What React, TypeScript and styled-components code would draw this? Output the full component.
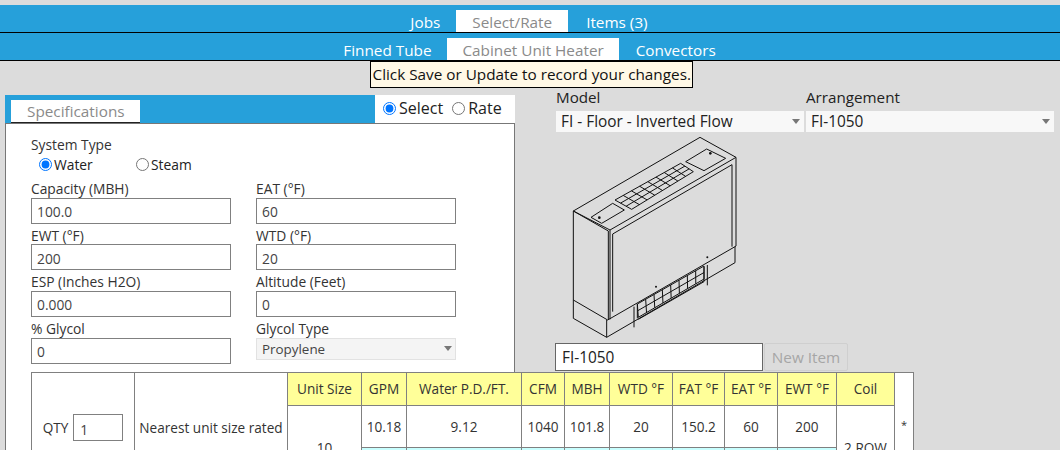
import React from 'react';
import styled, { createGlobalStyle } from 'styled-components';

const GlobalStyle = createGlobalStyle`
  html, body {
    margin: 0;
    height: 450px;
    overflow: hidden;
    background: #dcdcdc;
    font-family: "Open Sans", "Noto Sans", sans-serif;
    color: #222;
  }
`;

const TabBar = styled.div<{ $first?: boolean }>`
  display: flex;
  justify-content: center;
  box-sizing: border-box;
  height: 28px;
  padding-top: 5px;
  margin-top: ${(p) => (p.$first ? '5px' : '0')};
  background: #26a0da;
  border-bottom: 1px solid #000;
`;

const Tab = styled.div<{ $active?: boolean; $pad: number }>`
  padding: 0 ${(p) => p.$pad}px;
  height: 22px;
  line-height: 24px;
  font-size: 15.3px;
  background: ${(p) => (p.$active ? '#fff' : 'transparent')};
  color: ${(p) => (p.$active ? '#8a8a8a' : '#fff')};
`;

const NoticeRow = styled.div`
  display: flex;
  justify-content: center;
  padding-left: 2px;
`;

const Notice = styled.div`
  box-sizing: border-box;
  width: 323px;
  height: 27px;
  line-height: 25px;
  padding-left: 2px;
  font-size: 15.3px;
  white-space: nowrap;
  border: 1px solid #000;
  background: #fff8e6;
  color: #111;
`;

const Main = styled.div`
  display: flex;
  align-items: flex-start;
  padding-left: 5px;
`;

const Panel = styled.div`
  width: 510px;
  margin-top: 7px;
  flex: none;
`;

const PanelHead = styled.div`
  display: flex;
  justify-content: space-between;
  height: 28px;
  background: #26a0da;
`;

const PanelTab = styled.div`
  align-self: flex-end;
  margin-left: 6px;
  width: 129px;
  height: 23px;
  line-height: 22px;
  box-sizing: border-box;
  padding-left: 16px;
  background: #fff;
  color: #8a8a8a;
  font-size: 15.3px;
  border-bottom: 1px solid #222;
`;

const ModeBox = styled.div`
  display: flex;
  align-items: center;
  width: 140px;
  box-sizing: border-box;
  padding: 0 0 2px 8px;
  background: #fff;
  font-size: 16px;
`;

const ModeLabel = styled.label`
  display: flex;
  align-items: center;
  gap: 3px;
  margin-right: 9px;
`;

const Radio = styled.input.attrs({ type: 'radio', readOnly: true })`
  width: 13px;
  height: 13px;
  margin: 0;
  accent-color: #0075ff;
`;

const PanelBody = styled.div`
  box-sizing: border-box;
  height: 340px;
  padding: 11px 0 0 25px;
  background: #fff;
  border-left: 1px solid #777;
  border-right: 1px solid #777;
  border-top: 1px solid #777;
`;

const SmallLabel = styled.div`
  height: 20.67px;
  line-height: 24px;
  font-size: 13.8px;
  color: #333;
  white-space: nowrap;
`;

const SystemLabel = styled(SmallLabel)`
  line-height: 19px;
`;

const SystemRow = styled.div`
  display: flex;
  align-items: flex-start;
  height: 22.33px;
  margin-top: -1px;
  padding-left: 8px;
  font-size: 13.8px;
  line-height: 20px;
`;

const SystemOption = styled.label`
  display: flex;
  align-items: center;
  gap: 2px;
  width: 97px;
`;

const FormGrid = styled.div`
  display: grid;
  grid-template-columns: 200px 200px;
  column-gap: 25px;
`;

const Field = styled.div`
  height: 46.67px;
`;

const TextInput = styled.input.attrs({ readOnly: true })`
  position: relative;
  display: block;
  box-sizing: border-box;
  width: 100%;
  height: 26px;
  padding: 2px 5px 0;
  border: 1px solid #808080;
  border-radius: 0;
  outline: none;
  background: #fff;
  font: 13.8px "Open Sans", sans-serif;
  color: #444;
`;

const SelectWrap = styled.div<{ $w: number }>`
  position: relative;
  width: ${(p) => p.$w}px;
  &::after {
    content: '';
    position: absolute;
    right: 4px;
    top: 8px;
    border-left: 4px solid transparent;
    border-right: 4px solid transparent;
    border-top: 5px solid #777;
  }
`;

const Select = styled.select`
  display: block;
  width: 100%;
  height: 21px;
  box-sizing: border-box;
  padding: 0 0 0 5px;
  appearance: none;
  border: 0;
  border-radius: 0;
  outline: none;
  background: #f8f8f8;
  font: 15.4px "Open Sans", sans-serif;
  color: #222;
`;

const GlycolSelect = styled(Select)`
  height: 22px;
  padding-left: 5px;
  border: 1px solid #e2e2e2;
  background: #f4f4f4;
  font-size: 13.4px;
  color: #444;
  opacity: 1;
`;

const Table = styled.table`
  width: 882px;
  margin-top: 8px;
  table-layout: fixed;
  border-collapse: collapse;
  background: #fff;
  font-size: 13.6px;
  color: #333;
  text-align: center;
`;

const Th = styled.th`
  height: 32px;
  padding: 0;
  font-weight: 400;
  background: #ffff99;
  border: 1px solid #808080;
  white-space: nowrap;
`;

const Td = styled.td<{ $tint?: boolean }>`
  height: 41px;
  padding: 0;
  border: 1px solid #808080;
  background: ${(p) => (p.$tint ? '#c8ffff' : '#fff')};
  white-space: nowrap;
`;

const SideCell = styled(Td)`
  padding-bottom: 6px;
`;

const StarCell = styled(Td)`
  padding-bottom: 12px;
  font-size: 11px;
`;

const QtyWrap = styled.div`
  display: flex;
  align-items: center;
  justify-content: center;
  gap: 5px;
`;

const QtyInput = styled(TextInput)`
  width: 50px;
  height: 27px;
  padding: 3px 0 0 6px;
`;

const Side = styled.div`
  margin-left: 41px;
  flex: none;
`;

const SelectRow = styled.div`
  display: flex;
  gap: 2px;
`;

const ModelField = styled.div`
  display: flex;
  flex-direction: column;
`;

const ModelLabel = styled.div`
  height: 23px;
  line-height: 19px;
  font-size: 15.2px;
  color: #222;
`;

const Drawing = styled.svg`
  display: block;
  width: 190px;
  height: 213px;
  margin: -2px 0 0 4px;
`;

const NameRow = styled.div`
  display: flex;
  margin-left: -1px;
`;

const NameInput = styled(TextInput)`
  width: 208px;
  height: 28px;
  padding: 0 6px;
  font-size: 15.4px;
  color: #222;
  border-color: #666;
`;

const NewItem = styled.button`
  width: 84px;
  height: 28px;
  margin-left: 1px;
  padding: 0;
  border: 1px solid #cfcfcf;
  border-radius: 2px;
  background: #dcdcdc;
  color: #a6a6a6;
  font: 15.3px "Open Sans", sans-serif;
`;

const lerp = (a: number[], b: number[], t: number) => [a[0] + (b[0] - a[0]) * t, a[1] + (b[1] - a[1]) * t];

// grid lines of a four-cornered vent, corners in drawing order
const ventLines = (p: number[][], across: number, down: number) => {
  let d = `M${p[0]} L${p[1]} L${p[2]} L${p[3]} Z`;
  for (let i = 1; i < across; i++) d += ` M${lerp(p[0], p[1], i / across)} L${lerp(p[3], p[2], i / across)}`;
  for (let i = 1; i < down; i++) d += ` M${lerp(p[0], p[3], i / down)} L${lerp(p[1], p[2], i / down)}`;
  return d;
};

const HeaterDrawing = () => (
  <Drawing viewBox="0 0 570 639">
    <g fill="none" stroke="#111" strokeWidth="3">
      <path d="M40 243 L420 22 L528 82 L150 300 Z" />
      <path d="M40 243 V565 L140 622 L525 398 V350 L528 348 V82" />
      <path d="M40 510 L143 570 L525 350" />
      <path d="M140 570 V622" />
      <path d="M40 243 L145 303 V570" />
      <path d="M150 300 V568" />
      <path d="M158 312 V545" />
      <path d="M158 312 L516 104 V350" />
      <path d="M93 262 L158 220 L193 240 L125 280 Z" />
      <path d="M377 95 L440 57 L497 85 L432 122 Z" />
      <path d={ventLines([[165, 210], [362, 100], [400, 125], [215, 238]], 8, 3)} />
      <path d="M222 530 V592 M442 405 V466 M232 522 V565 M432 410 V455" />
      <path d={ventLines([[232, 522], [432, 408], [432, 447], [235, 562]], 8, 2)} />
      <path d="M235 568 L432 455" />
    </g>
    <g fill="#111">
      <circle cx="118" cy="263" r="4" />
      <circle cx="451" cy="70" r="4" />
      <circle cx="288" cy="470" r="3" />
      <circle cx="442" cy="382" r="3" />
    </g>
  </Drawing>
);

const fields = [
  ['Capacity (MBH)', '100.0', 'EAT (°F)', '60'],
  ['EWT (°F)', '200', 'WTD (°F)', '20'],
  ['ESP (Inches H2O)', '0.000', 'Altitude (Feet)', '0'],
];

const columns = [103, 153, 74, 45, 115, 43, 45, 63, 52, 53, 59, 58, 19];
const headers = ['Unit Size', 'GPM', 'Water P.D./FT.', 'CFM', 'MBH', 'WTD °F', 'FAT °F', 'EAT °F', 'EWT °F', 'Coil'];
const firstRow = ['10.18', '9.12', '1040', '101.8', '20', '150.2', '60', '200'];

const App: React.FC = () => {
  return (
    <>
      <GlobalStyle />
      <TabBar $first>
        <Tab $pad={16}>Jobs</Tab>
        <Tab $pad={16} $active>Select/Rate</Tab>
        <Tab $pad={18}>Items (3)</Tab>
      </TabBar>
      <TabBar>
        <Tab $pad={16}>Finned Tube</Tab>
        <Tab $pad={15} $active>Cabinet Unit Heater</Tab>
        <Tab $pad={17}>Convectors</Tab>
      </TabBar>
      <NoticeRow>
        <Notice>Click Save or Update to record your changes.</Notice>
      </NoticeRow>
      <Main>
        <Panel>
          <PanelHead>
            <PanelTab>Specifications</PanelTab>
            <ModeBox>
              <ModeLabel><Radio name="mode" defaultChecked />Select</ModeLabel>
              <ModeLabel><Radio name="mode" />Rate</ModeLabel>
            </ModeBox>
          </PanelHead>
          <PanelBody>
            <SystemLabel>System Type</SystemLabel>
            <SystemRow>
              <SystemOption><Radio name="system" defaultChecked />Water</SystemOption>
              <SystemOption><Radio name="system" />Steam</SystemOption>
            </SystemRow>
            <FormGrid>
              {fields.map((f) => (
                <React.Fragment key={f[0]}>
                  <Field>
                    <SmallLabel>{f[0]}</SmallLabel>
                    <TextInput defaultValue={f[1]} />
                  </Field>
                  <Field>
                    <SmallLabel>{f[2]}</SmallLabel>
                    <TextInput defaultValue={f[3]} />
                  </Field>
                </React.Fragment>
              ))}
              <Field>
                <SmallLabel>% Glycol</SmallLabel>
                <TextInput defaultValue="0" />
              </Field>
              <Field>
                <SmallLabel>Glycol Type</SmallLabel>
                <SelectWrap $w={200}>
                  <GlycolSelect disabled><option>Propylene</option></GlycolSelect>
                </SelectWrap>
              </Field>
            </FormGrid>
            <Table>
              <colgroup>
                {columns.map((w, i) => <col key={i} width={w} />)}
              </colgroup>
              <tbody>
                <tr>
                  <SideCell rowSpan={3}>
                    <QtyWrap>QTY <QtyInput defaultValue="1" /></QtyWrap>
                  </SideCell>
                  <SideCell rowSpan={3}>Nearest unit size rated</SideCell>
                  {headers.map((h) => <Th key={h}>{h}</Th>)}
                  <StarCell rowSpan={3}>*</StarCell>
                </tr>
                <tr>
                  <Td rowSpan={2}>10</Td>
                  {firstRow.map((v, i) => <Td key={i}>{v}</Td>)}
                  <Td rowSpan={2}>2 ROW</Td>
                </tr>
                <tr>
                  {firstRow.map((_, i) => <Td key={i} $tint />)}
                </tr>
              </tbody>
            </Table>
          </PanelBody>
        </Panel>
        <Side>
          <SelectRow>
            <ModelField>
              <ModelLabel>Model</ModelLabel>
              <SelectWrap $w={248}>
                <Select><option>FI - Floor - Inverted Flow</option></Select>
              </SelectWrap>
            </ModelField>
            <ModelField>
              <ModelLabel>Arrangement</ModelLabel>
              <SelectWrap $w={248}>
                <Select><option>FI-1050</option></Select>
              </SelectWrap>
            </ModelField>
          </SelectRow>
          <HeaterDrawing />
          <NameRow>
            <NameInput defaultValue="FI-1050" />
            <NewItem disabled>New Item</NewItem>
          </NameRow>
        </Side>
      </Main>
    </>
  );
};

export default App;
